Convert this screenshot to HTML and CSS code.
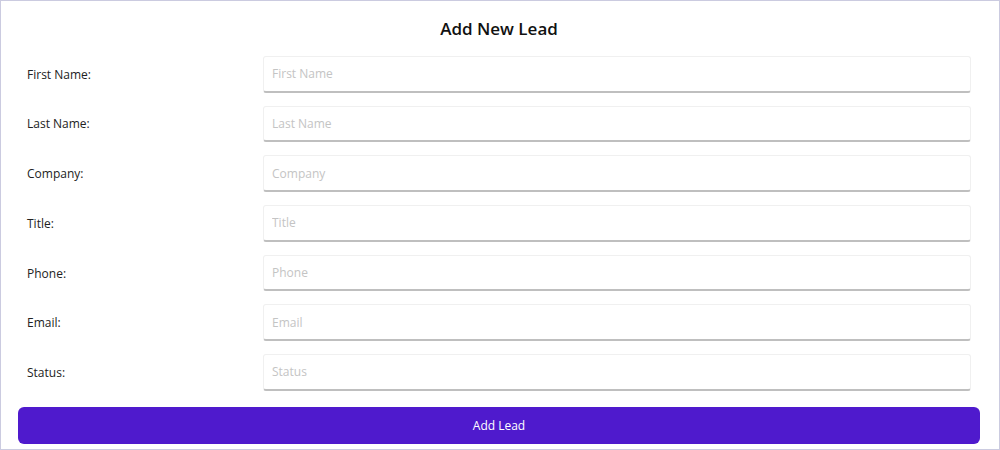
FILE: index.html
```html
<!DOCTYPE html>
<html>
<head>
<meta charset="utf-8">
<link rel="stylesheet" href="styles.css">
</head>
<body>
<div class="frame">
  <h1 class="title">Add New Lead</h1>
  <form class="form">
    <label class="label">First Name:</label>
    <input class="field" placeholder="First Name">
    <label class="label">Last Name:</label>
    <input class="field" placeholder="Last Name">
    <label class="label">Company:</label>
    <input class="field" placeholder="Company">
    <label class="label">Title:</label>
    <input class="field" placeholder="Title">
    <label class="label">Phone:</label>
    <input class="field" placeholder="Phone">
    <label class="label">Email:</label>
    <input class="field" placeholder="Email">
    <label class="label">Status:</label>
    <input class="field" placeholder="Status">
  </form>
  <button class="submit" type="button">Add Lead</button>
</div>
</body>
</html>
```
FILE: styles.css
```css
html, body {
  margin: 0;
  padding: 0;
  background: #ffffff;
}
body {
  font-family: "Open Sans", "Noto Sans", sans-serif;
  color: #1a1a1a;
}
.frame {
  box-sizing: border-box;
  width: 1000px;
  height: 450px;
  border: 1px solid #cbcbe0;
  padding: 0 19px 0 17px;
  display: flex;
  flex-direction: column;
}
.title {
  margin: 17px 0 0;
  font-size: 17px;
  line-height: 22px;
  font-weight: 600;
  text-align: center;
  color: #111;
}
.form {
  margin: 16px 0 0;
  display: grid;
  grid-template-columns: 245px 1fr;
  row-gap: 13.2px;
  align-items: center;
  padding-right: 9px;
}
.label {
  padding-left: 9px;
  font-size: 12px;
  color: #222;
}
.field {
  box-sizing: border-box;
  height: 36.5px;
  width: 100%;
  margin: 0;
  border: 1px solid #f0f0f0;
  border-bottom: 2px solid #bfbfbf;
  border-radius: 3px;
  padding: 0 8px;
  font-family: "Open Sans", "Noto Sans", sans-serif;
  font-size: 12px;
  background: #fff;
  outline: none;
}
.field::placeholder {
  color: #c4c4c4;
}
.submit {
  margin-top: 16.3px;
  height: 37px;
  width: 100%;
  border: none;
  border-radius: 6px;
  background: #4f1acd;
  color: #fff;
  font-family: "Open Sans", "Noto Sans", sans-serif;
  font-size: 12px;
  cursor: pointer;
}
```
